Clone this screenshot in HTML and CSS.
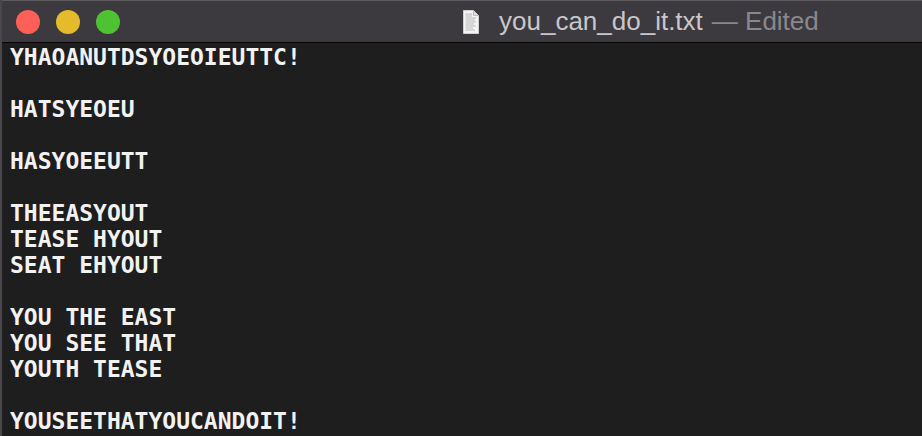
FILE: index.html
```html
<!DOCTYPE html>
<html>
<head>
<meta charset="utf-8">
<link rel="stylesheet" href="styles.css">
</head>
<body>
<div class="window">
  <div class="titlebar">
    <div class="lights">
      <span class="light red"></span>
      <span class="light yellow"></span>
      <span class="light green"></span>
    </div>
    <div class="title">
      <svg class="docicon" width="16" height="24" viewBox="0 0 16 24">
        <path d="M0.5 0.5 H10.5 L15.5 5.5 V23.5 H0.5 Z" fill="#f4f4f4" stroke="#cfcfcf" stroke-width="1"/>
        <path d="M10.5 0.5 V5.5 H15.5" fill="#dcdcdc" stroke="#bdbdbd" stroke-width="1"/>
        <g stroke="#a9a9a9" stroke-width="0.8">
          <line x1="2.5" y1="4" x2="9" y2="4"/>
          <line x1="2.5" y1="6" x2="9" y2="6"/>
          <line x1="2.5" y1="8" x2="13" y2="8"/>
          <line x1="2.5" y1="10" x2="12" y2="10"/>
          <line x1="2.5" y1="12" x2="13" y2="12"/>
          <line x1="2.5" y1="14" x2="11" y2="14"/>
          <line x1="2.5" y1="16" x2="13" y2="16"/>
          <line x1="2.5" y1="18" x2="10" y2="18"/>
          <line x1="2.5" y1="20" x2="12" y2="20"/>
        </g>
      </svg>
      <span class="name">you_can_do_it.txt</span>
      <span class="edited">— Edited</span>
    </div>
  </div>
  <pre class="content">YHAOANUTDSYOEOIEUTTC!

HATSYEOEU

HASYOEEUTT

THEEASYOUT
TEASE HYOUT
SEAT EHYOUT

YOU THE EAST
YOU SEE THAT
YOUTH TEASE

YOUSEETHATYOUCANDOIT!</pre>
</div>
</body>
</html>
```
FILE: styles.css
```css
html, body {
  margin: 0;
  padding: 0;
  background: #1e1e1e;
  overflow: hidden;
}
.window {
  width: 922px;
  height: 436px;
  display: flex;
  flex-direction: column;
  background: #1e1e1e;
  border-left: 2px solid #49474b;
  box-sizing: border-box;
}
.titlebar {
  height: 43px;
  flex: none;
  box-sizing: border-box;
  display: flex;
  align-items: center;
  background: #3c3a3e;
  border-top: 1px solid #5c5a5e;
  border-bottom: 1px solid #050505;
  padding-left: 14px;
}
.lights {
  display: flex;
  gap: 16px;
}
.light {
  width: 24px;
  height: 24px;
  border-radius: 50%;
  display: block;
}
.red { background: #fe5f57; }
.yellow { background: #e6bb2b; }
.green { background: #4fc233; }
.title {
  display: flex;
  align-items: center;
  margin-left: 343px;
  font-family: "Liberation Sans", Arial, sans-serif;
  font-size: 26px;
  white-space: nowrap;
}
.docicon {
  margin-right: 20px;
}
.name {
  color: #c9c7cb;
}
.edited {
  color: #8a888c;
  margin-left: 9px;
}
.content {
  margin: 0;
  padding: 1px 0 0 8px;
  font-family: "DejaVu Sans Mono", Menlo, monospace;
  font-weight: bold;
  font-size: 23px;
  line-height: 26px;
  color: #f2f2f2;
}
```
